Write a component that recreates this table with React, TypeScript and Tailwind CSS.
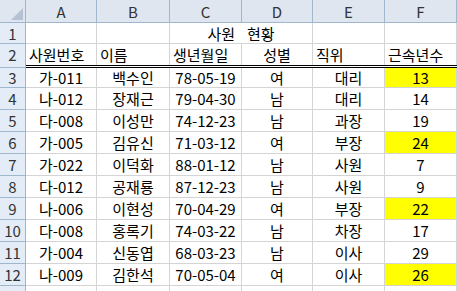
import { FC } from "react";

type Row = {
  no: number;
  id: string;
  name: string;
  birth: string;
  sex: string;
  title: string;
  years: number;
  mark?: boolean;
};

const rows: Row[] = [
  { no: 3, id: "가-011", name: "백수인", birth: "78-05-19", sex: "여", title: "대리", years: 13, mark: true },
  { no: 4, id: "나-012", name: "장재근", birth: "79-04-30", sex: "남", title: "대리", years: 14 },
  { no: 5, id: "다-008", name: "이성만", birth: "74-12-23", sex: "남", title: "과장", years: 19 },
  { no: 6, id: "가-005", name: "김유신", birth: "71-03-12", sex: "여", title: "부장", years: 24, mark: true },
  { no: 7, id: "가-022", name: "이덕화", birth: "88-01-12", sex: "남", title: "사원", years: 7 },
  { no: 8, id: "다-012", name: "공재룡", birth: "87-12-23", sex: "남", title: "사원", years: 9 },
  { no: 9, id: "나-006", name: "이현성", birth: "70-04-29", sex: "여", title: "부장", years: 22, mark: true },
  { no: 10, id: "다-008", name: "홍록기", birth: "74-03-22", sex: "남", title: "차장", years: 17 },
  { no: 11, id: "가-004", name: "신동엽", birth: "68-03-23", sex: "남", title: "이사", years: 29 },
  { no: 12, id: "나-009", name: "김한석", birth: "70-05-04", sex: "여", title: "이사", years: 26, mark: true },
];

const cols = ["w-[71px]", "w-[73px]", "w-[72px]", "w-[71px]", "w-[72px]", "flex-1"];
const letters = ["A", "B", "C", "D", "E", "F"];

const RowHead: FC<{ n: number | string }> = ({ n }) => (
  <div className="w-[26px] shrink-0 flex items-center justify-center bg-[#e4ecf7] border-r border-[#9eb6ce] border-b border-b-[#9eb6ce] text-[#333]">
    {n}
  </div>
);

const Cell: FC<{ w: string; align?: string; fill?: boolean; children?: React.ReactNode }> = ({
  w,
  align = "justify-center",
  fill,
  children,
}) => (
  <div
    className={`${w} shrink-0 flex items-center ${align} px-[3px] border-r border-[#d4d4d4] whitespace-nowrap ${
      fill ? "bg-[#ffff00]" : ""
    }`}
  >
    {children}
  </div>
);

const App: FC = () => {
  return (
    <div
      className="w-[457px] h-[291px] overflow-hidden bg-white text-[15px] leading-none text-black"
      style={{ fontFamily: '"Noto Sans CJK KR", "Noto Sans", sans-serif' }}
    >
      {/* column letters */}
      <div className="flex h-[23px]">
        <div className="w-[26px] shrink-0 relative bg-[#dfe6ef] border-r border-b border-[#9eb6ce]">
          <svg className="absolute right-[2px] bottom-[2px]" width="12" height="12" viewBox="0 0 12 12">
            <polygon points="12,0 12,12 0,12" fill="#b5c2d3" />
          </svg>
        </div>
        {letters.map((l, i) => (
          <div
            key={l}
            className={`${cols[i]} shrink-0 flex items-center justify-center bg-[#dfe6ef] border-r border-b border-[#9eb6ce] text-[#333]`}
          >
            {l}
          </div>
        ))}
      </div>

      {/* row 1 */}
      <div className="flex h-[21px]">
        <RowHead n={1} />
        <div className="flex flex-1 border-b border-[#d4d4d4]">
          <Cell w={cols[0]} />
          <Cell w={cols[1]} />
          <div className="w-[143px] shrink-0 flex items-center justify-center gap-[12px] border-r border-[#d4d4d4] whitespace-nowrap">
            <span>사원</span>
            <span>현황</span>
          </div>
          <Cell w={cols[4]} />
          <Cell w={cols[5]} />
        </div>
      </div>

      {/* row 2 */}
      <div className="flex h-[24px]">
        <div className="w-[26px] shrink-0 flex items-center justify-center bg-[#e4ecf7] border-r border-[#9eb6ce] border-b border-b-[#9eb6ce] text-[#333] pb-[3px]">
          2
        </div>
        <div className="flex flex-1 border-b-[3px] border-double border-black">
          <Cell w={cols[0]} align="justify-start">사원번호</Cell>
          <Cell w={cols[1]} align="justify-start">이름</Cell>
          <Cell w={cols[2]} align="justify-start">생년월일</Cell>
          <Cell w={cols[3]}>성별</Cell>
          <Cell w={cols[4]} align="justify-start">직위</Cell>
          <Cell w={cols[5]} align="justify-start">근속년수</Cell>
        </div>
      </div>

      {rows.map((r, idx) => (
        <div key={r.no} className={`flex ${idx === 0 ? "h-[20px]" : "h-[22px]"}`}>
          <RowHead n={r.no} />
          <div className="flex flex-1 border-b border-[#d4d4d4]">
            <Cell w={cols[0]}>{r.id}</Cell>
            <Cell w={cols[1]}>{r.name}</Cell>
            <Cell w={cols[2]}>{r.birth}</Cell>
            <Cell w={cols[3]}>{r.sex}</Cell>
            <Cell w={cols[4]}>{r.title}</Cell>
            <Cell w={cols[5]} fill={r.mark}>
              {r.years}
            </Cell>
          </div>
        </div>
      ))}

      <div className="flex h-[10px]">
        <div className="w-[26px] shrink-0 bg-[#e4ecf7] border-r border-[#9eb6ce]" />
        <div className="flex flex-1">
          {cols.map((c, i) => (
            <Cell key={i} w={c} />
          ))}
        </div>
      </div>
    </div>
  );
};

export default App;
